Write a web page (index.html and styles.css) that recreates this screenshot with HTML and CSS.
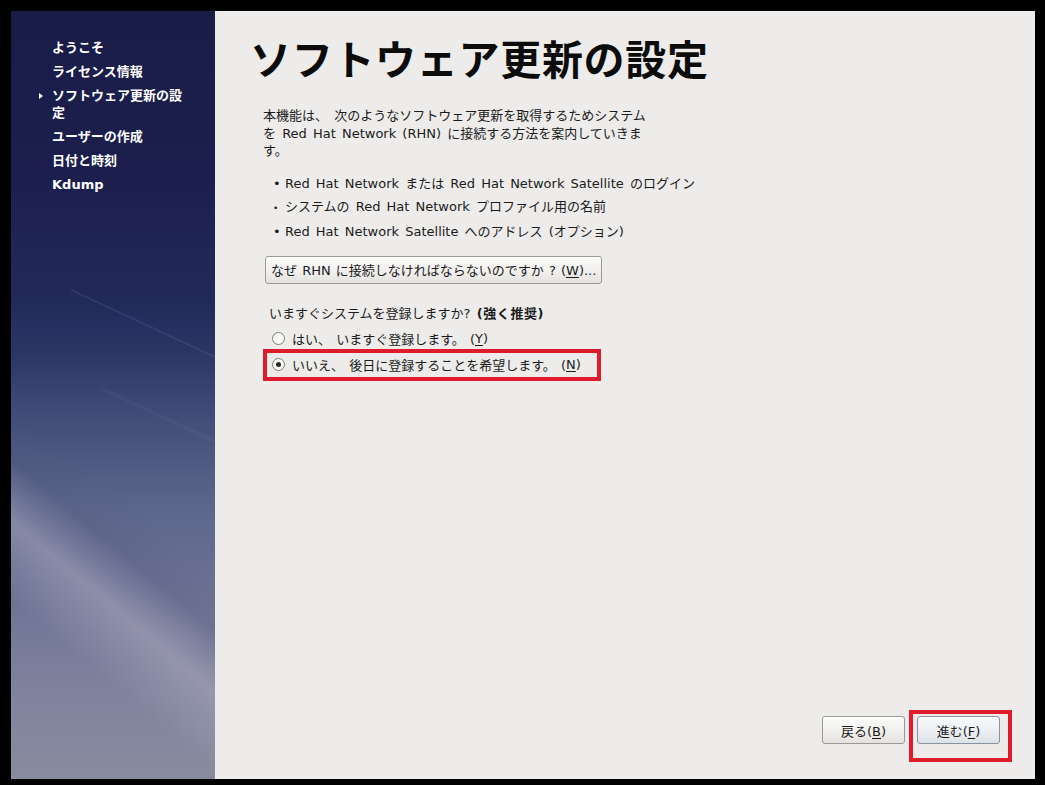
FILE: index.html
```html
<!DOCTYPE html>
<html lang="ja">
<head>
<meta charset="utf-8">
<title>ソフトウェア更新の設定</title>
<link rel="stylesheet" href="styles.css">
</head>
<body>
<div class="screen">
  <div class="window">
    <aside class="sidebar">
      <ul class="steps">
        <li>ようこそ</li>
        <li>ライセンス情報</li>
        <li class="current">ソフトウェア更新の設<br>定</li>
        <li>ユーザーの作成</li>
        <li>日付と時刻</li>
        <li class="latin">Kdump</li>
      </ul>
    </aside>
    <main class="main">
      <h1 class="title">ソフトウェア更新の設定</h1>
      <p class="intro">本機能は、 次のようなソフトウェア更新を取得するためシステム<br>を Red Hat Network (RHN) に接続する方法を案内していきま<br>す。</p>
      <ul class="bullets">
        <li><span class="dot">•</span>Red Hat Network または Red Hat Network Satellite のログイン</li>
        <li><span class="dot small">•</span>システムの Red Hat Network プロファイル用の名前</li>
        <li><span class="dot">•</span>Red Hat Network Satellite へのアドレス (オプション)</li>
      </ul>
      <div class="why-row">
        <button class="btn why">なぜ RHN に接続しなければならないのですか ? (<u>W</u>)...</button>
      </div>
      <p class="question">いますぐシステムを登録しますか? <b>(強く推奨)</b></p>
      <div class="radios">
        <label class="radio"><span class="circle"></span>はい、 いますぐ登録します。 (<u>Y</u>)</label>
        <label class="radio marked"><span class="circle on"></span>いいえ、 後日に登録することを希望します。 (<u>N</u>)</label>
      </div>
      <div class="actions">
        <button class="btn nav">戻る(<u>B</u>)</button>
        <button class="btn nav next">進む(<u>F</u>)</button>
      </div>
    </main>
  </div>
</div>
</body>
</html>
```

FILE: styles.css
```css
html, body {
  margin: 0;
  padding: 0;
  background: #000;
}
body {
  font-family: "DejaVu Sans", "Noto Sans CJK JP", sans-serif;
  font-size: 13px;
  color: #1b1b1b;
}
.screen {
  width: 1045px;
  height: 785px;
  box-sizing: border-box;
  padding: 11px 10px 6px 11px;
  background: #000;
}
.window {
  display: flex;
  width: 1024px;
  height: 768px;
  background: #edecea;
}
.sidebar {
  width: 204px;
  flex: none;
  position: relative;
  overflow: hidden;
  background:
    linear-gradient(25deg, rgba(150,165,220,0) 53.6%, rgba(150,165,220,0.16) 54.5%, rgba(150,165,220,0) 55.4%) 60px 270px / 144px 100px no-repeat,
    linear-gradient(25deg, rgba(150,165,220,0) 52%, rgba(150,165,220,0.07) 54%, rgba(150,165,220,0) 56%) 90px 360px / 114px 100px no-repeat,
    linear-gradient(40deg, rgba(170,168,190,0) 19%, rgba(175,172,192,0.35) 25%, rgba(180,176,195,0.45) 27.5%, rgba(175,172,192,0.25) 30%, rgba(170,168,190,0) 34%),
    linear-gradient(40deg, rgba(80,84,120,0) 30%, rgba(80,84,120,0.18) 34%, rgba(80,84,120,0) 40%),
    linear-gradient(180deg, #1a1c48 0%, #1c1f4d 22%, #222a5a 38%, #2b3564 44%, #3a4572 50%, #4b567f 57%, #5b658b 64%, #676e92 72%, #747898 80%, #7e829d 88%, #898c9f 100%);
}
.steps {
  list-style: none;
  margin: 0;
  padding: 28px 0 0 41px;
  color: #fff;
  font-weight: bold;
  font-size: 13px;
}
.steps li {
  line-height: 17px;
  margin-bottom: 7px;
  position: relative;
}
.steps li.current::before {
  content: "";
  position: absolute;
  left: -13px;
  top: 6px;
  border-left: 4px solid #fff;
  border-top: 3px solid transparent;
  border-bottom: 3px solid transparent;
}
.steps li.latin {
  font-family: "DejaVu Sans", sans-serif;
}
.main {
  flex: 1;
  display: flex;
  flex-direction: column;
  padding: 26px 35px 35px 35px;
  box-sizing: border-box;
}
.title {
  margin: 0;
  font-size: 41px;
  line-height: 48px;
  font-weight: bold;
  color: #0c0c0c;
  letter-spacing: 0.7px;
}
.intro {
  margin: 22px 0 0 13px;
  line-height: 17.5px;
  word-spacing: 2px;
}
.bullets {
  list-style: none;
  margin: 12px 0 0 23px;
  padding: 0;
  word-spacing: 2px;
}
.bullets li {
  line-height: 23px;
}
.dot {
  display: inline-block;
  width: 12px;
}
.dot.small {
  font-size: 9px;
  width: 12px;
}
.why-row {
  margin: 13px 0 0 15px;
}
.btn {
  font-family: "DejaVu Sans", "Noto Sans CJK JP", sans-serif;
  font-size: 13px;
  color: #1b1b1b;
  height: 28px;
  border: 1px solid #9c9a98;
  border-radius: 3px;
  background: linear-gradient(180deg, #fbfbfa 0%, #f1f0ee 55%, #e4e2df 100%);
  padding: 0 5px;
  box-shadow: inset 0 1px 0 #fff;
}
.btn.why {
  word-spacing: 1px;
}
.question {
  margin: 21px 0 0 19px;
  line-height: 18px;
  word-spacing: 2px;
}
.question b {
  font-weight: bold;
  letter-spacing: 0.6px;
}
.radios {
  margin: 4px 0 0 17px;
  display: flex;
  flex-direction: column;
  gap: 2px;
  word-spacing: 1px;
}
.radio {
  display: flex;
  align-items: center;
  height: 24px;
  width: 330px;
  padding-left: 5px;
  box-sizing: border-box;
  position: relative;
}
.circle {
  width: 11px;
  height: 11px;
  border: 1px solid #7e7c7a;
  border-radius: 50%;
  background: #fbfbfa;
  margin-right: 7px;
  position: relative;
  flex: none;
}
.circle.on::after {
  content: "";
  position: absolute;
  left: 3px;
  top: 3px;
  width: 5px;
  height: 5px;
  border-radius: 50%;
  background: #2a2a2a;
}
.radio.marked::after {
  content: "";
  position: absolute;
  left: -4px;
  top: -4px;
  right: -4px;
  bottom: -4px;
  border: 4px solid #e01b2b;
}
.actions {
  margin-top: auto;
  display: flex;
  justify-content: flex-end;
  gap: 12px;
}
.btn.nav {
  width: 83px;
  padding: 0;
}
.btn.next {
  position: relative;
  border-color: #8792a4;
  background: linear-gradient(180deg, #f7f9fb 0%, #eceff3 55%, #dde2e8 100%);
}
.btn.next::after {
  content: "";
  position: absolute;
  left: -9px;
  top: -7px;
  right: -13px;
  bottom: -19px;
  border: 4px solid #e01b2b;
}
u {
  text-decoration: underline;
  text-underline-offset: 2px;
}
```
